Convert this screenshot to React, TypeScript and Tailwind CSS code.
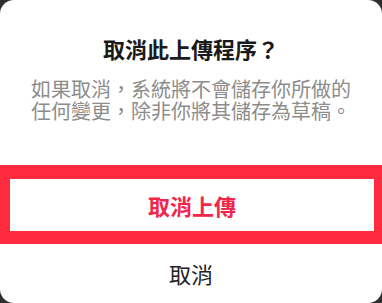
export default function App() {
  return (
    <div className="w-[382px] h-[303px] bg-[#2e2e2e] font-['Noto_Sans_CJK_TC',sans-serif]">
      <div className="h-full bg-white rounded-[14px] overflow-hidden flex flex-col">
        {/* Title */}
        <h1 className="pt-[34px] text-center text-[22px] leading-[28px] font-bold text-[#1a1a1a]">
          取消此上傳程序？
        </h1>
        {/* Message */}
        <p className="mt-[16px] px-[28px] text-center text-[20px] leading-[22px] text-[#8c8c8c]">
          如果取消，系統將不會儲存你所做的任何變更，除非你將其儲存為草稿。
        </p>
        {/* Highlighted destructive action */}
        <div className="mt-[43px] border-t-[14px] border-b-[13px] border-l-[10px] border-r-[8px] border-[#ff2a3d]">
          <button className="w-full h-[52px] flex items-center justify-center text-[22px] font-bold text-[#f2264a]">
            取消上傳
          </button>
        </div>
        {/* Cancel */}
        <button className="h-[58px] flex items-center justify-center text-[22px] text-[#222]">
          取消
        </button>
      </div>
    </div>
  );
}
